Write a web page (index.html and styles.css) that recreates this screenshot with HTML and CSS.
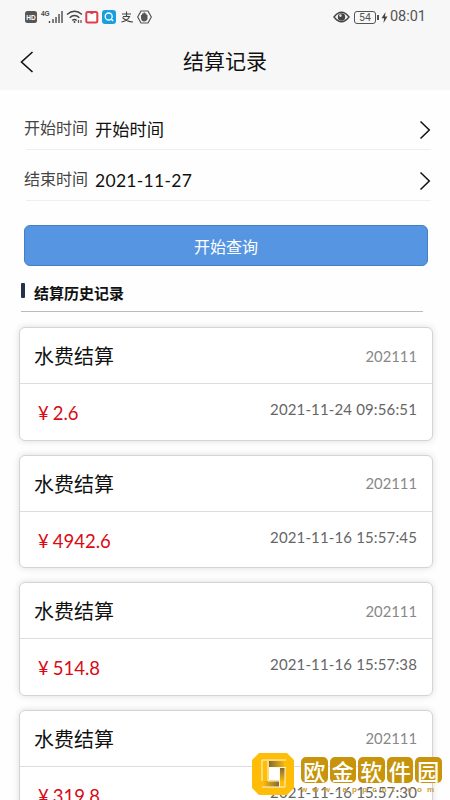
FILE: index.html
```html
<!DOCTYPE html>
<html lang="zh-CN">
<head>
<meta charset="utf-8">
<title>结算记录</title>
<link rel="stylesheet" href="styles.css">
</head>
<body>
<header class="top">
  <div class="status">
    <svg class="status-icons" width="130" height="20" viewBox="0 0 130 20">
      <rect x="1" y="3" width="12" height="12" rx="2.5" fill="#555"/>
      <text x="2.2" y="11.700" class="hd">HD</text>
      <text x="17" y="7.800" class="net">4G</text>
      <path d="M25.500 13v2M29 11v4M32 9v6M35 6v9M38 3v12" stroke="#4b4b4b" stroke-width="1.400"/>
      <path d="M43 6.500q7.500-6.500 15 0M45.700 9.700q4.800-4.500 9.600 0M48.300 12.500q2.200-2 4.400 0" fill="none" stroke="#444" stroke-width="1.500"/>
      <circle cx="50.500" cy="14" r="1" fill="#444"/>
      <path d="M54.500 12v3M57 12v3" stroke="#555" stroke-width="1.200"/>
      <rect x="62.300" y="4" width="11" height="10.500" rx="1.500" fill="#fff" stroke="#df3e4a" stroke-width="2"/>
      <path d="M65.500 4.500q2.200 0 2.200 1.500q0-1.500 2.200-1.500" fill="none" stroke="#df3e4a" stroke-width="1.500"/>
      <rect x="78" y="2" width="14" height="14" rx="3" fill="#189fdf"/>
      <circle cx="84.700" cy="8.500" r="3.500" fill="none" stroke="#fff" stroke-width="1.300"/>
      <path d="M87.200 11l2 2" stroke="#fff" stroke-width="1.300"/>
      <path d="M98 6h9M102.500 3.500v5M99 8.500h6.500q-2 4.500-8 5.500M98.500 9.500q4 4 10.500 4.500" fill="none" stroke="#444" stroke-width="1.100"/>
      <path d="M117 3h7l3.300 6-3.300 6h-7l-3.300-6z" fill="none" stroke="#555" stroke-width="1.200"/>
      <path d="M117 10V7h1V5.500h1.500V4.500h1.500v1h1.500V7h1v4q-1 2.500-3.500 2.500T117 10z" fill="#555"/>
    </svg>
    <div class="status-right">
      <svg width="17" height="14" viewBox="0 0 17 14">
        <path d="M1 7q7.500-9.500 15 0q-7.500 9.500-15 0z" fill="none" stroke="#444" stroke-width="1.400"/>
        <circle cx="8.500" cy="7" r="3.700" fill="#444"/><circle cx="7.400" cy="5.600" r="1.300" fill="#ddd"/>
      </svg>
      <span class="battery">54</span>
      <svg class="bolt" width="7" height="13" viewBox="0 0 7 13"><path d="M4.500 1L.5 7.300h2.600L2.500 12l4-6.500H4z" fill="#444"/></svg>
      <span class="clock">08:01</span>
    </div>
  </div>
  <nav class="nav">
    <svg class="back" width="14" height="24" viewBox="0 0 14 24"><path d="M12.500 2L1.500 12l11 10" fill="none" stroke="#111" stroke-width="1.600"/></svg>
    <h1>结算记录</h1>
  </nav>
</header>
<main>
  <section class="filters">
    <div class="field"><span class="label">开始时间</span><span class="value">开始时间</span>
      <svg width="12" height="20" viewBox="0 0 12 20"><path d="M1.500 1.500l8.800 8.500-8.800 8.500" fill="none" stroke="#111" stroke-width="1.500"/></svg></div>
    <div class="field second"><span class="label">结束时间</span><span class="value date">2021-11-27</span>
      <svg width="12" height="20" viewBox="0 0 12 20"><path d="M1.500 1.500l8.800 8.500-8.800 8.500" fill="none" stroke="#111" stroke-width="1.500"/></svg></div>
  </section>
  <button class="query">开始查询</button>
  <h2>结算历史记录</h2>
  <section class="list">
    <article class="card"><div class="head"><span>水费结算</span><span class="period">202111</span></div><div class="body"><span class="amount"><i>¥</i>2.6</span><time>2021-11-24 09:56:51</time></div></article>
    <article class="card"><div class="head"><span>水费结算</span><span class="period">202111</span></div><div class="body"><span class="amount"><i>¥</i>4942.6</span><time>2021-11-16 15:57:45</time></div></article>
    <article class="card"><div class="head"><span>水费结算</span><span class="period">202111</span></div><div class="body"><span class="amount"><i>¥</i>514.8</span><time>2021-11-16 15:57:38</time></div></article>
    <article class="card"><div class="head"><span>水费结算</span><span class="period">202111</span></div><div class="body"><span class="amount"><i>¥</i>319.8</span><time>2021-11-16 15:57:30</time></div></article>
  </section>
</main>
<aside class="brand">
  <svg width="44" height="44" viewBox="0 0 44 44">
    <defs>
      <linearGradient id="h"><stop stop-color="#80693a"/><stop offset="1" stop-color="#ffbd08"/></linearGradient>
      <linearGradient id="r"><stop stop-color="#ffbd08"/><stop offset="1" stop-color="#80693a"/></linearGradient>
      <linearGradient id="v" x2="0" y2="1"><stop stop-color="#80693a"/><stop offset="1" stop-color="#ffbd08"/></linearGradient>
    </defs>
    <path fill="#ffbd08" fill-rule="evenodd" d="M8 1h28l7 7v28l-7 7H8l-7-7V8zM18 16v12h10V16z"/>
    <path d="M18 9h16v6H18z" fill="url(#h)"/><path d="M29 16h5v14h-5z" fill="url(#v)"/>
    <path d="M12 29h16v6H12z" fill="url(#r)"/>
    <path d="M11 29V8h24M34 15v20H11M17 9v20h11M18 15.500h17M28.500 15v20" stroke="#fff8e1" stroke-width="1" fill="none"/>
  </svg>
  <div class="brand-text"><div class="seals"><b>欧</b><b>金</b><b>软</b><b>件</b><b>园</b></div><div class="site">www.appcnt.com</div></div>
</aside>
</body>
</html>
```
FILE: styles.css
```css
* { box-sizing: border-box; }
body { margin: 0; height: 800px; overflow: hidden; background: #fefefe; color: #111; font-family: Lato, "Noto Sans CJK SC", sans-serif; }
svg { display: block; flex: none; }
.top { height: 90px; background: #f7f7f7; }
.status { height: 34px; padding: 8px 25px 0 24px; display: flex; justify-content: space-between; align-items: flex-start; }
.hd { font: bold 6.500px "Liberation Sans", sans-serif; fill: #fff; }
.net { font: bold 6.500px "Liberation Sans", sans-serif; fill: #444; }
.status-right { display: flex; align-items: center; height: 18px; color: #555; margin-right: -1px; }
.battery { width: 22px; height: 13px; margin-left: 4px; border: 1.5px solid #555; border-radius: 3px; font: 10.500px/11px Roboto, sans-serif; text-align: center; position: relative; }
.battery::after { content: ""; position: absolute; right: -4px; top: 3px; width: 1.5px; height: 5px; background: #555; }
.bolt { margin-left: 5px; }
.clock { font: 14.500px/18px Roboto, sans-serif; margin-left: 2px; }
.nav { height: 56px; display: flex; align-items: center; padding-left: 20px; }
.nav h1 { flex: 1; margin: 0 34px 2px 0; text-align: center; font-size: 21px; line-height: 30px; font-weight: 400; }
.filters { padding: 10px 19px 0 24px; }
.field { height: 50px; display: flex; align-items: center; padding-top: 10px; background: linear-gradient(#efefef, #efefef) 2px 100% / 100% 1px no-repeat; }
.field.second { height: 51px; }
.field svg { margin: 0 0 0 auto; }
.label { width: 71px; font-size: 16px; line-height: 24px; color: #444; padding-bottom: 4px; }
.value { font-size: 17.300px; line-height: 24px; }
.date { font-size: 17.500px; letter-spacing: .3px; }
.query { display: block; width: 404px; height: 41px; padding: 0; margin: 24px 0 0 24px; border: 1px solid #447fc2; border-radius: 6px; background: #5595e2; color: #fff; font: 16px/24px "Noto Sans CJK SC", sans-serif; }
h2 { margin: 17px 27px 0 21px; height: 29px; border-bottom: 1px solid #bbb; display: flex; align-items: flex-start; gap: 9px; font-size: 15px; line-height: 20px; font-weight: 700; }
h2::before { content: ""; width: 4px; height: 15px; background: #24324d; border-radius: 1px; }
.list { padding: 15px 17px 0 19px; display: grid; gap: 14px; }
.card { height: 113.500px; border: 1px solid #d4d4d4; border-radius: 6px; background: #fff; box-shadow: 0 0 7px #0002; }
.head { height: 56px; padding: 0 15px 0 14px; display: flex; align-items: center; justify-content: space-between; border-bottom: 1px solid #ddd; font-size: 20px; }
.period { font-size: 14.800px; color: #888; }
.body { padding: 14px 15px 0 18px; display: flex; justify-content: space-between; align-items: flex-start; }
.amount { color: #d90a14; font-size: 18.500px; line-height: 30px; }
.amount i { font-style: normal; font-size: 18.500px; margin-right: 4px; }
time { font-size: 15px; line-height: 22px; letter-spacing: .14px; color: #666; }
.brand { position: absolute; left: 251px; top: 752px; display: flex; gap: 6px; }
.brand-text { padding-top: 5px; }
.seals { display: flex; gap: 2px; }
.seals b { width: 26.500px; height: 26px; border-radius: 5px; background: #c7940b; color: #fff; font: 500 22px/26px "Noto Sans CJK SC", sans-serif; text-align: center; }
.site { font: bold 8px/13px "Liberation Sans", sans-serif; letter-spacing: 5.200px; color: #d09e35; white-space: nowrap; }
```
